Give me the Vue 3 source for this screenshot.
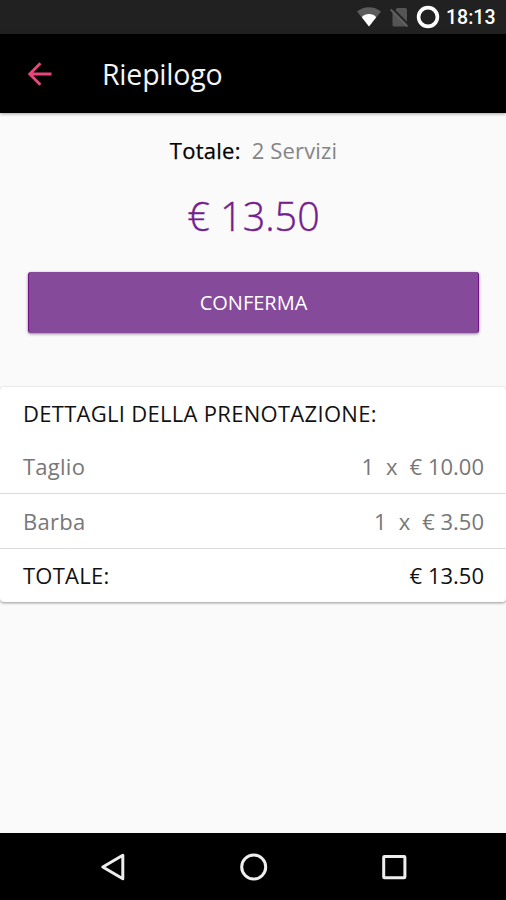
<script setup>
const items = [
  { name: 'Taglio', quantity: 1, price: '€ 10.00' },
  { name: 'Barba', quantity: 1, price: '€ 3.50' },
]
</script>

<template>
  <div class="screen">
    <div class="status">
      <svg class="wifi" width="24" height="20" viewBox="0 0 24 20">
        <path d="M0 4.500C7-1.300 17-1.300 24 4.500L12 19.500Z" fill="#5c5c5c" />
        <path d="M4.800 10.300C8 6 16 6 19.200 10.300L12 19.500Z" fill="#fff" />
      </svg>
      <svg class="sim" width="19" height="21" viewBox="0 0 19 21">
        <path d="M7 1H15.500Q17 1 17 2.500V18Q17 19.500 15.500 19.500H4Q2.500 19.500 2.500 18V6Z" fill="#555" />
        <path d="M2.500 1.500L19 18" stroke="#212121" stroke-width="1.800" />
        <path d="M.7 2.500L17.500 19.500" stroke="#606060" stroke-width="1.800" />
      </svg>
      <svg class="ring" width="24" height="24" viewBox="0 0 24 24">
        <circle cx="12" cy="12" r="9.400" fill="none" stroke="#fff" stroke-width="3.600" />
      </svg>
      <span class="clock">18:13</span>
    </div>
    <header class="bar">
      <svg class="back" width="24" height="24" viewBox="0 0 24 24">
        <path d="M12.400 1.300L1.800 12L12.400 22.700M1.800 12H23.500" fill="none" stroke="#e8467c" stroke-width="2.900" />
      </svg>
      <h1>Riepilogo</h1>
    </header>
    <main>
      <p class="summary"><b>Totale:</b><span>2 Servizi</span></p>
      <p class="amount">€ 13.50</p>
      <button class="confirm">CONFERMA</button>
      <section class="card">
        <h2>DETTAGLI DELLA PRENOTAZIONE:</h2>
        <div v-for="item in items" :key="item.name" class="row">
          <span class="name">{{ item.name }}</span>
          <span class="cost"><span>{{ item.quantity }}</span><span>x</span><span>{{ item.price }}</span></span>
        </div>
        <div class="row total"><span class="label">TOTALE:</span><span class="sum">€ 13.50</span></div>
      </section>
    </main>
    <nav>
      <svg width="30" height="30" viewBox="0 0 30 30"><path d="M3.800 15L23.800 3.300V26.700Z" /></svg>
      <svg width="30" height="30" viewBox="0 0 30 30"><circle cx="14.700" cy="15" r="12" /></svg>
      <svg width="30" height="30" viewBox="0 0 30 30"><rect x="4.700" y="4.500" width="21.200" height="21.200" rx=".8" /></svg>
    </nav>
  </div>
</template>

<style>
body { margin: 0; background: #fafafa; }
</style>

<style scoped>
.screen { width: 506px; height: 900px; display: flex; flex-direction: column; overflow: hidden; background: #fafafa; font-family: "Open Sans", sans-serif; }
.status { height: 34px; flex: none; box-sizing: border-box; background: #212121; display: flex; align-items: center; padding-left: 357px; }
.wifi { margin-right: 9px; }
.sim { margin-right: 7px; }
.ring { margin-right: 6px; flex: none; }
.clock { font: 500 19.5px/34px Roboto, sans-serif; color: #fff; padding-top: 2px; }
.bar { height: 79px; flex: none; background: #000; display: flex; align-items: center; padding-left: 28px; box-shadow: 0 1px 3px rgba(0, 0, 0, .35); }
.back { margin-right: 50px; }
h1 { margin: 1px 0 0; font-size: 28.5px; font-weight: 400; letter-spacing: -.22px; line-height: 76px; color: #f4f4f4; }
main { flex: 1; display: flex; flex-direction: column; }
.summary { margin: 22px 0 0; padding-left: 1px; display: flex; justify-content: center; gap: 11px; font-size: 22px; line-height: 30px; color: #858585; font-weight: 400; }
.summary span { letter-spacing: .15px; }
.summary b { font-weight: 500; letter-spacing: .25px; color: #000; -webkit-text-stroke: .25px #000; }
.amount { margin: 21px 0 0; padding-left: 1px; text-align: center; font-size: 39.500px; line-height: 60px; font-weight: 300; color: #741f8e; -webkit-text-stroke: .4px #741f8e; }
.confirm { margin: 26px 27px 0 28px; height: 61px; border: solid #701184; border-width: 0 1px; border-radius: 3px; background: #864a9a; color: #fff; font: 400 20px/60px "Open Sans", sans-serif; padding: 0; box-shadow: 0 1px 3px rgba(40, 0, 50, .5); }
.card { margin-top: 54px; height: 215px; background: #fff; border-radius: 4px; box-shadow: 0 1px 3px rgba(0, 0, 0, .4); color: #111; font-size: 22px; }
h2 { margin: 0; padding: 0 23px; font-size: 22px; line-height: 53px; font-weight: 400; letter-spacing: .29px; }
.row { display: flex; justify-content: space-between; height: 53px; line-height: 53px; padding: 0 22px 0 23px; color: #777; }
.row + .row { height: 54px; line-height: 54px; border-top: 1px solid #dcdcdc; }
.name, .label { letter-spacing: .25px; }
.cost { display: flex; gap: 12px; }
.row.total { color: #111; height: 53px; line-height: 53px; }
nav { height: 67px; flex: none; background: #000; display: flex; align-items: center; justify-content: center; gap: 110px; padding-left: 2px; }
nav svg { fill: none; stroke: #eee; stroke-width: 3; stroke-linejoin: round; }
</style>
